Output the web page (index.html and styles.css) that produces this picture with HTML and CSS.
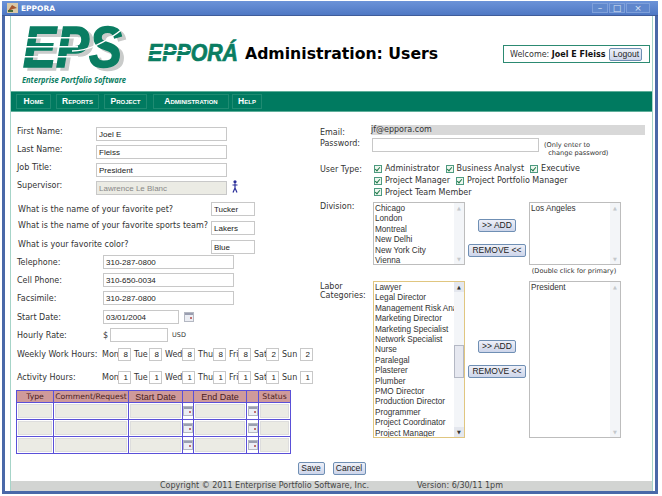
FILE: index.html
```html
<!DOCTYPE html>
<html lang="en">
<head>
    <meta charset="UTF-8">
    <title>EPPORA</title>
    <link rel="stylesheet" href="styles.css">
</head>
<body>
<div class="window">
    <div class="titlebar">
        <svg class="app-icon" width="11" height="10" viewBox="0 0 11 10"><rect width="11" height="10" fill="#d9c9a8"/><path d="M1 8 L5 2 L10 5 L6 6 Z" fill="#a5552f"/><rect x="1" y="7" width="5" height="2" fill="#4a6a3a"/></svg>
        <span class="title-text">EPPORA</span>
        <div class="win-btns">
            <span class="win-btn">&#8211;</span>
            <span class="win-btn">&#9633;</span>
            <span class="win-btn close">&#215;</span>
        </div>
    </div>

    <div class="page">
        <!-- Header -->
        <div class="header">
            <svg class="logo-eps" width="112" height="66" viewBox="0 0 112 66">
                <text x="1" y="42" class="eps-big" textLength="99" lengthAdjust="spacingAndGlyphs">EPS</text>
                <rect x="0" y="12" width="56" height="1.5" fill="#fff"/>
                <rect x="0" y="21" width="56" height="1.5" fill="#fff"/>
                <rect x="0" y="31" width="56" height="1.5" fill="#fff"/>
                <path d="M50 26 C68 26 88 14 102 3" stroke="#fff" stroke-width="1.5" fill="none"/>
                <text x="0" y="58" class="eps-tag" textLength="104" lengthAdjust="spacingAndGlyphs">Enterprise Portfolio Software</text>
            </svg>
            <svg class="logo-eppora" width="92" height="24" viewBox="0 0 92 24">
                <text x="0" y="20" class="eppora-word" textLength="90" lengthAdjust="spacingAndGlyphs">EPPORÁ</text>
                <rect x="0" y="9" width="42" height="1" fill="#fff"/>
                <rect x="0" y="14" width="42" height="1" fill="#fff"/>
            </svg>
            <h1 class="page-title">Administration: Users</h1>
            <div class="welcome">
                <span>Welcome: <b>Joel E Fleiss</b></span>
                <button class="btn logout">Logout</button>
            </div>
        </div>

        <!-- Nav -->
        <div class="nav">
            <a class="nav-item w-home">Home</a>
            <a class="nav-item w-reports">Reports</a>
            <a class="nav-item w-project">Project</a>
            <a class="nav-item w-admin">Administration</a>
            <a class="nav-item w-help">Help</a>
        </div>

        <div class="columns">
            <!-- Left column -->
            <div class="col-left">
                <div class="row names"><label>First Name:</label><input class="txt name" value="Joel E"></div>
                <div class="row names"><label>Last Name:</label><input class="txt name" value="Fleiss"></div>
                <div class="row names"><label>Job Title:</label><input class="txt name" value="President"></div>
                <div class="row names">
                    <label>Supervisor:</label><input class="txt name disabled" value="Lawrence Le Blanc">
                    <svg class="person" width="6" height="13" viewBox="0 0 6 13"><circle cx="3" cy="1.8" r="1.6" fill="#2b2f9a"/><path d="M3 3.5 V8 M0.5 5 H5.5 M3 8 L1 12.5 M3 8 L5 12.5" stroke="#2b2f9a" stroke-width="1.2" fill="none"/></svg>
                </div>

                <div class="questions">
                    <div class="row quest"><label>What is the name of your favorite pet?</label><input class="txt short" value="Tucker"></div>
                    <div class="row quest"><label class="lift">What is the name of your favorite sports team?</label><input class="txt short" value="Lakers"></div>
                    <div class="row quest"><label class="lift">What is your favorite color?</label><input class="txt short" value="Blue"></div>
                </div>

                <div class="row phones"><label>Telephone:</label><input class="txt name" value="310-287-0800"></div>
                <div class="row phones"><label>Cell Phone:</label><input class="txt name" value="310-650-0034"></div>
                <div class="row phones"><label>Facsimile:</label><input class="txt name" value="310-287-0800"></div>
                <div class="row phones start-date"><label>Start Date:</label><input class="txt date" value="03/01/2004">
                    <svg class="cal" width="10" height="10" viewBox="0 0 10 10"><use href="#cal-icon"/></svg>
                </div>
                <div class="row phones"><label>Hourly Rate:</label><span class="dollar">$</span><input class="txt rate"><span class="usd">USD</span></div>

                <div class="row hours first-hours">
                    <label>Weekly Work Hours:</label>
                    <div class="days">
                        <span class="d-mon">Mon</span><input class="txt hr" value="8"><span class="d-tue">Tue</span><input class="txt hr" value="8"><span class="d-wed">Wed</span><input class="txt hr" value="8"><span class="d-thu">Thu</span><input class="txt hr" value="8"><span class="d-fri">Fri</span><input class="txt hr" value="8"><span class="d-sat">Sat</span><input class="txt hr" value="2"><span class="d-sun">Sun</span><input class="txt hr" value="2">
                    </div>
                </div>
                <div class="row hours second-hours">
                    <label>Activity Hours:</label>
                    <div class="days">
                        <span class="d-mon">Mon</span><input class="txt hr" value="1"><span class="d-tue">Tue</span><input class="txt hr" value="1"><span class="d-wed">Wed</span><input class="txt hr" value="1"><span class="d-thu">Thu</span><input class="txt hr" value="1"><span class="d-fri">Fri</span><input class="txt hr" value="1"><span class="d-sat">Sat</span><input class="txt hr" value="1"><span class="d-sun">Sun</span><input class="txt hr" value="1">
                    </div>
                </div>

                <table class="requests">
                    <colgroup><col class="c1"><col class="c2"><col class="c3"><col class="c4"><col class="c5"><col class="c6"><col class="c7"></colgroup>
                    <tr><th>Type</th><th>Comment/Request</th><th class="big">Start Date</th><th></th><th class="big">End Date</th><th></th><th>Status</th></tr>
                    <tr><td><i class="cell"></i></td><td><i class="cell"></i></td><td><i class="cell"></i></td><td><svg class="cal" width="10" height="10" viewBox="0 0 10 10"><use href="#cal-icon"/></svg></td><td><i class="cell"></i></td><td><svg class="cal" width="10" height="10" viewBox="0 0 10 10"><use href="#cal-icon"/></svg></td><td><i class="cell"></i></td></tr>
                    <tr><td><i class="cell"></i></td><td><i class="cell"></i></td><td><i class="cell"></i></td><td><svg class="cal" width="10" height="10" viewBox="0 0 10 10"><use href="#cal-icon"/></svg></td><td><i class="cell"></i></td><td><svg class="cal" width="10" height="10" viewBox="0 0 10 10"><use href="#cal-icon"/></svg></td><td><i class="cell"></i></td></tr>
                    <tr><td><i class="cell"></i></td><td><i class="cell"></i></td><td><i class="cell"></i></td><td><svg class="cal" width="10" height="10" viewBox="0 0 10 10"><use href="#cal-icon"/></svg></td><td><i class="cell"></i></td><td><svg class="cal" width="10" height="10" viewBox="0 0 10 10"><use href="#cal-icon"/></svg></td><td><i class="cell"></i></td></tr>
                </table>
            </div>

            <!-- Right column -->
            <div class="col-right">
                <div class="r-row email"><label>Email:</label><div class="email-val">jf@eppora.com</div></div>
                <div class="r-row password">
                    <label>Password:</label><input class="txt pass">
                    <div class="note">(Only enter to<br>&nbsp;&nbsp;change password)</div>
                </div>

                <div class="r-row usertype">
                    <label>User Type:</label>
                    <div class="checks">
                        <div class="check-line"><span class="chk"></span>Administrator<span class="chk"></span>Business Analyst<span class="chk"></span>Executive</div>
                        <div class="check-line"><span class="chk"></span>Project Manager<span class="chk"></span>Project Portfolio Manager</div>
                        <div class="check-line"><span class="chk"></span>Project Team Member</div>
                    </div>
                </div>

                <div class="r-row division">
                    <label>Division:</label>
                    <div class="picker short-pick">
                        <div class="list">
                            <div class="items"><div>Chicago</div><div>London</div><div>Montreal</div><div>New Delhi</div><div>New York City</div><div>Vienna</div></div>
                            <div class="scroll"><span class="arr">&#9650;</span><span class="arr">&#9660;</span></div>
                        </div>
                        <div class="moves">
                            <button class="btn">&gt;&gt; ADD</button>
                            <button class="btn">REMOVE &lt;&lt;</button>
                        </div>
                        <div class="list">
                            <div class="items"><div>Los Angeles</div></div>
                            <div class="scroll"><span class="arr">&#9650;</span><span class="arr">&#9660;</span></div>
                        </div>
                    </div>
                </div>
                <div class="dbl-note">(Double click for primary)</div>

                <div class="r-row labor">
                    <label>Labor<br>Categories:</label>
                    <div class="picker tall-pick">
                        <div class="list focus">
                            <div class="items">
                                <div>Lawyer</div><div>Legal Director</div><div>Management Risk Analyst</div><div>Marketing Director</div><div>Marketing Specialist</div><div>Network Specialist</div><div>Nurse</div><div>Paralegal</div><div>Plasterer</div><div>Plumber</div><div>PMO Director</div><div>Production Director</div><div>Programmer</div><div>Project Coordinator</div><div>Project Manager</div>
                            </div>
                            <div class="scroll active"><span class="arr">&#9650;</span><span class="thumb"></span><span class="arr">&#9660;</span></div>
                        </div>
                        <div class="moves">
                            <button class="btn">&gt;&gt; ADD</button>
                            <button class="btn">REMOVE &lt;&lt;</button>
                        </div>
                        <div class="list">
                            <div class="items"><div>President</div></div>
                            <div class="scroll"><span class="arr">&#9650;</span><span class="arr">&#9660;</span></div>
                        </div>
                    </div>
                </div>
            </div>
        </div>

        <div class="actions">
            <button class="btn save">Save</button>
            <button class="btn cancel">Cancel</button>
        </div>

        <div class="footer">
            <span>Copyright © 2011 Enterprise Portfolio Software, Inc.</span>
            <span>Version: 6/30/11 1pm</span>
        </div>
    </div>
</div>

<svg class="defs" width="0" height="0">
    <symbol id="cal-icon" viewBox="0 0 10 10">
        <rect x="0.5" y="0.5" width="9" height="9" fill="#eceef4" stroke="#b4b8c2"/>
        <rect x="1" y="1" width="8" height="2" fill="#9a9eb0"/>
        <rect x="6" y="5" width="2" height="2" fill="#c07070"/>
    </symbol>
</svg>
</body>
</html>
```

FILE: styles.css
```css
html, body {
    margin: 0;
    height: 100%;
    overflow: hidden;
    background: #fff;
}
body {
    font-family: "DejaVu Sans", Verdana, sans-serif;
    font-size: 8px;
    color: #333;
}
.defs {
    position: absolute;
}
.window {
    width: 656px;
    height: 493px;
    margin: 1px 0 0 2px;
    box-sizing: border-box;
    padding: 0 2px 0 5px;
    background: #fff;
    border: solid #4a68a8;
    border-width: 0 3px 3px 3px;
    border-radius: 3px 3px 0 0;
    display: flex;
    flex-direction: column;
}
.titlebar {
    height: 15px;
    flex: none;
    margin: 0 -5px 0 -8px;
    padding: 0 8px 0 5px;
    display: flex;
    align-items: center;
    gap: 3px;
    background: linear-gradient(#6c93d8, #4f78c4);
    border-bottom: 1px solid #3f5c9a;
    box-sizing: border-box;
}
.title-text {
    color: #fff;
    font: bold 7.5px "DejaVu Sans", sans-serif;
}
.win-btns {
    margin-left: auto;
    display: flex;
    gap: 1px;
}
.win-btn {
    width: 16px;
    height: 10px;
    line-height: 9px;
    text-align: center;
    color: #d8e4f6;
    font-size: 9px;
    background: #6088cc;
    border: 1px solid #7fa0da;
    box-sizing: border-box;
}
.win-btn.close {
    width: 24px;
    background: #5f86cc;
}
.page {
    flex: 1;
    min-height: 0;
    background: #fff;
    border-left: 1px solid #a6d4c8;
    border-right: 1px solid #a6d4c8;
    display: flex;
    flex-direction: column;
}

/* header */
.header {
    height: 75px;
    flex: none;
    display: flex;
    align-items: flex-start;
    box-sizing: border-box;
    padding-left: 11px;
}
.logo-eps {
    margin-top: 9px;
    overflow: visible;
}
.eps-big {
    font: italic bold 57px "Liberation Sans", sans-serif;
    fill: #0a7d62;
    stroke: #0a7d62;
    stroke-width: 1.4px;
    filter: drop-shadow(4px 3px 0 #c9cbca);
}
.eps-tag {
    font: italic bold 9px "Open Sans", sans-serif;
    fill: #0a7d62;
}
.logo-eppora {
    margin: 25px 0 0 14px;
    overflow: visible;
}
.eppora-word {
    font: italic bold 23px "Liberation Sans", sans-serif;
    fill: #0a7d62;
    stroke: #0a7d62;
    stroke-width: 0.7px;
}
.page-title {
    margin: 28px 0 0 5px;
    font: bold 15.7px "DejaVu Sans", sans-serif;
    color: #000;
    white-space: nowrap;
}
.welcome {
    margin: 29px 2px 0 auto;
    width: 147px;
    height: 18px;
    box-sizing: border-box;
    border: 1.5px solid #2c8a72;
    display: flex;
    align-items: center;
    justify-content: space-between;
    padding: 0 7px 0 6px;
    font-size: 8px;
    white-space: nowrap;
}
.welcome b {
    color: #111;
}
.logout {
    width: 33px;
    padding: 0;
}

/* nav */
.nav {
    height: 21px;
    flex: none;
    background: #007a60;
    border-top: 1px solid #5fae9a;
    border-bottom: 1px solid #5fae9a;
    box-sizing: border-box;
    display: flex;
    align-items: center;
    padding-left: 5px;
    gap: 5px;
}
.nav-item {
    height: 15px;
    box-sizing: border-box;
    border: 1px solid #1f8b72;
    text-align: center;
    color: #fff;
    font: bold 8.5px/13px "Liberation Sans", sans-serif;
    font-variant: small-caps;
}
.w-home { width: 35px; }
.w-reports { width: 43px; }
.w-project { width: 43px; }
.w-admin { width: 76px; margin-left: 1px; }
.w-help { width: 30px; margin-left: -2px; }

/* form */
.columns {
    flex: none;
    display: flex;
    height: 331px;
    padding-top: 13px;
    box-sizing: border-box;
}
.col-left {
    width: 300px;
    padding-left: 6px;
    margin-right: 3px;
    flex: none;
}
.col-right {
    flex: 1;
    min-width: 0;
}
.row {
    display: flex;
    align-items: center;
    height: 18px;
    white-space: nowrap;
}
.names label {
    width: 79px;
    flex: none;
    padding-bottom: 6px;
}
.phones label {
    width: 86px;
    flex: none;
}
.txt {
    box-sizing: border-box;
    height: 14px;
    padding: 0 2px;
    border: 1px solid #c8c8c8;
    font: 8px "Liberation Sans", sans-serif;
    color: #222;
    background: #fff;
    outline: none;
    flex: none;
}
.name { width: 131px; }
.disabled {
    background: #ebebe4;
    color: #888;
}
.person {
    margin-left: 5px;
    margin-bottom: 3px;
}
.questions {
    margin: 3px 0 -3px;
    display: flex;
    flex-direction: column;
    gap: 1px;
}
.quest label {
    width: 193px;
    flex: none;
    padding-left: 1px;
}
.quest .lift {
    padding-bottom: 5px;
}
.short { width: 44px; }
.date { width: 76px; }
.start-date { margin-top: 1px; }
.cal {
    flex: none;
    margin-left: 5px;
}
.dollar { width: 7px; }
.rate { width: 58px; }
.usd {
    margin-left: 4px;
    font-size: 6.5px;
}
.hours label {
    width: 85px;
    flex: none;
}
.first-hours { margin-top: 1px; }
.second-hours { margin-top: 5px; }
.days {
    display: flex;
    align-items: center;
}
.days span {
    flex: none;
}
.d-mon { width: 16px; }
.d-tue { width: 15px; margin-left: 3px; }
.d-wed { width: 17px; margin-left: 3px; }
.d-thu { width: 15px; margin-left: 3px; }
.d-fri { width: 9px; margin-left: 3px; }
.d-sat { width: 12px; margin-left: 3px; }
.d-sun { width: 18px; margin-left: 3px; }
.hr {
    width: 13px;
    height: 13px;
    text-align: right;
}
.requests {
    margin: 4px 0 0 -1px;
    border-collapse: collapse;
    table-layout: fixed;
    width: 274px;
    border: 1px solid #5a50d8;
}
.c1 { width: 37px; }
.c2 { width: 75px; }
.c3 { width: 54px; }
.c4 { width: 11px; }
.c5 { width: 53px; }
.c6 { width: 12px; }
.c7 { width: 32px; }
.requests th, .requests td {
    border: 1px solid #5a50d8;
    padding: 0;
}
.requests th {
    height: 11px;
    background: #cf9a9a;
    color: #4a2020;
    font: normal 7.7px "DejaVu Sans", sans-serif;
    white-space: nowrap;
    overflow: hidden;
}
.requests th.big {
    font: 9px "Liberation Sans", sans-serif;
}
.requests td {
    height: 16px;
    text-align: center;
    line-height: 0;
}
.requests td .cal {
    margin: 0;
}
.cell {
    display: block;
    height: 14px;
    margin: 0 1px;
    background: #ebebe4;
    border: 1px solid #ddd;
    box-sizing: border-box;
}

/* right column */
.r-row {
    display: flex;
    white-space: nowrap;
}
.r-row > label {
    width: 52px;
    flex: none;
}
.email {
    height: 10px;
}
.email label {
    margin-top: 3px;
}
.email-val {
    width: 274px;
    height: 10px;
    line-height: 10px;
    background: #d8d8d8;
    margin-left: -1px;
}
.password {
    margin-top: 3px;
    height: 24px;
}
.password label {
    padding-top: 1px;
}
.pass { width: 167px; }
.note {
    margin: 3px 0 0 5px;
    font-size: 6.6px;
    line-height: 8px;
    white-space: nowrap;
}
.usertype {
    margin-top: 1px;
    height: 39px;
}
.usertype label {
    padding-top: 2px;
}
.check-line {
    height: 11.7px;
    display: flex;
    align-items: center;
    white-space: nowrap;
}
.chk {
    width: 8px;
    height: 8px;
    box-sizing: border-box;
    margin: 0 3px 0 6px;
    border: 1px solid #4d9a80;
    background: #eef6ee;
    position: relative;
}
.chk:first-child {
    margin-left: 2px;
}
.chk::after {
    content: "";
    position: absolute;
    left: 1px;
    top: 0;
    width: 2px;
    height: 4px;
    border: solid #1f7a4a;
    border-width: 0 1px 1px 0;
    transform: rotate(40deg);
}
.picker {
    display: flex;
    margin-left: 1px;
}
.list {
    width: 92px;
    box-sizing: border-box;
    border: 1px solid #bdbdbd;
    display: flex;
    overflow: hidden;
    background: #fff;
}
.short-pick .list { height: 63px; }
.tall-pick .list { height: 157px; }
.list.focus {
    border-color: #e0c680;
}
.items {
    flex: 1;
    min-width: 0;
    padding: 1px 0 0 1px;
    font: 8.2px/10.4px "Liberation Sans", sans-serif;
    white-space: nowrap;
    overflow: hidden;
}
.scroll {
    width: 10px;
    flex: none;
    display: flex;
    flex-direction: column;
    justify-content: space-between;
    background: #f3f5f8;
    position: relative;
}
.arr {
    font-size: 5px;
    line-height: 10px;
    height: 10px;
    text-align: center;
    color: #c4c8cc;
}
.scroll.active .arr {
    color: #333;
    background: #e4e7ee;
}
.thumb {
    position: absolute;
    left: 0;
    right: 0;
    top: 63px;
    height: 33px;
    box-sizing: border-box;
    border: 1px solid #b4b8c4;
    background: #e6e8f0;
}
.moves {
    width: 64px;
    flex: none;
    display: flex;
    flex-direction: column;
    align-items: center;
    gap: 12px;
    padding-top: 17px;
    box-sizing: border-box;
}
.tall-pick .moves {
    padding-top: 59px;
}
.btn {
    height: 13px;
    padding: 0 3px;
    box-sizing: border-box;
    border: 1px solid #6f8fb4;
    border-radius: 2px;
    background: linear-gradient(#eef0f8, #cdd5ea);
    color: #222;
    font: 8.5px/11px "Liberation Sans", sans-serif;
    white-space: nowrap;
}
.dbl-note {
    margin: 1px 0 0 208px;
    width: 92px;
    height: 12px;
    text-align: center;
    font-size: 6.6px;
    line-height: 10px;
    white-space: nowrap;
}
.labor {
    margin-top: 3px;
}
.labor > label {
    padding-top: 1px;
    line-height: 9px;
}

/* bottom */
.actions {
    flex: none;
    display: flex;
    justify-content: center;
    gap: 8px;
    height: 13px;
    padding-top: 19px;
}
.actions .btn {
    padding: 0;
}
.actions .save { width: 27px; }
.actions .cancel { width: 33px; }
.footer {
    margin-top: auto;
    height: 10px;
    flex: none;
    background: #d2d4d2;
    display: flex;
    justify-content: center;
    gap: 48px;
    font-size: 8px;
    line-height: 10px;
    color: #444;
}
```
